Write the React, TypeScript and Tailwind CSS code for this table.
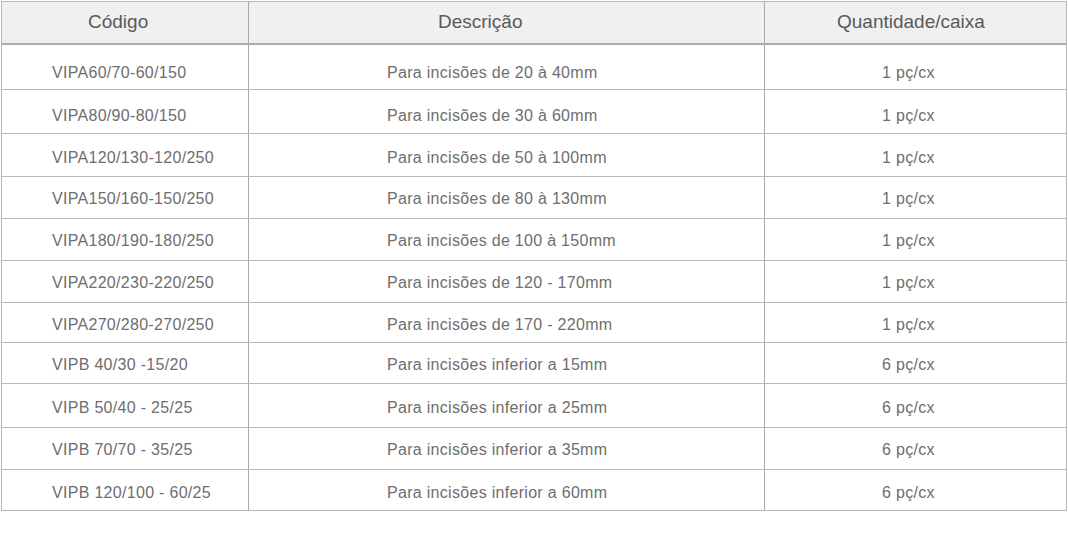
const rows = [
  { code: 'VIPA60/70-60/150', desc: 'Para incisões de 20 à 40mm', qty: '1 pç/cx', h: 'h-[45px]', pt: 'pt-[11px]' },
  { code: 'VIPA80/90-80/150', desc: 'Para incisões de 30 à 60mm', qty: '1 pç/cx', h: 'h-[44px]', pt: 'pt-[9px]' },
  { code: 'VIPA120/130-120/250', desc: 'Para incisões de 50 à 100mm', qty: '1 pç/cx', h: 'h-[43px]', pt: 'pt-[5px]' },
  { code: 'VIPA150/160-150/250', desc: 'Para incisões de 80 à 130mm', qty: '1 pç/cx', h: 'h-[42px]', pt: 'pt-[3px]' },
  { code: 'VIPA180/190-180/250', desc: 'Para incisões de 100 à 150mm', qty: '1 pç/cx', h: 'h-[42px]', pt: 'pt-[3px]' },
  { code: 'VIPA220/230-220/250', desc: 'Para incisões de 120 - 170mm', qty: '1 pç/cx', h: 'h-[42px]', pt: 'pt-[3px]' },
  { code: 'VIPA270/280-270/250', desc: 'Para incisões de 170 - 220mm', qty: '1 pç/cx', h: 'h-[40px]', pt: 'pt-[4px]' },
  { code: 'VIPB 40/30 -15/20', desc: 'Para incisões inferior a 15mm', qty: '6 pç/cx', h: 'h-[41px]', pt: 'pt-[3px]' },
  { code: 'VIPB 50/40 - 25/25', desc: 'Para incisões inferior a 25mm', qty: '6 pç/cx', h: 'h-[44px]', pt: 'pt-[4px]' },
  { code: 'VIPB 70/70 - 35/25', desc: 'Para incisões inferior a 35mm', qty: '6 pç/cx', h: 'h-[42px]', pt: 'pt-[2px]' },
  { code: 'VIPB 120/100 - 60/25', desc: 'Para incisões inferior a 60mm', qty: '6 pç/cx', h: 'h-[40px]', pt: 'pt-[5px]' },
];

const App = () => {
  return (
    <div className="h-[546px] w-[1068px] bg-white pl-px pt-px font-['Liberation_Sans',Arial,sans-serif]">
      <div className="w-[1066px] border border-[#b8b8b8]">
        <div className="flex h-[43px] border-b-2 border-[#ababab] bg-[#f0f0f0] text-[19px] text-[#5a5a5a]">
          <div className="flex w-[247px] items-center border-r border-[#a9a9a9] pl-[86px]">Código</div>
          <div className="flex w-[516px] items-center border-r border-[#a9a9a9] pl-[189px]">Descrição</div>
          <div className="flex flex-1 items-center pl-[72px]">Quantidade/caixa</div>
        </div>
        {rows.map((row, i) => (
          <div
            key={row.code}
            className={`flex ${row.h} ${i < rows.length - 1 ? 'border-b' : ''} border-[#b8b8b8] text-[16px] tracking-[0.3px] text-[#6e6e6e]`}
          >
            <div className={`flex w-[247px] items-center border-r border-[#a9a9a9] pl-[50px] ${row.pt}`}>{row.code}</div>
            <div className={`flex w-[516px] items-center border-r border-[#a9a9a9] pl-[138px] ${row.pt}`}>{row.desc}</div>
            <div className={`flex flex-1 items-center justify-center pr-[14px] ${row.pt}`}>{row.qty}</div>
          </div>
        ))}
      </div>
    </div>
  );
};

export default App;
